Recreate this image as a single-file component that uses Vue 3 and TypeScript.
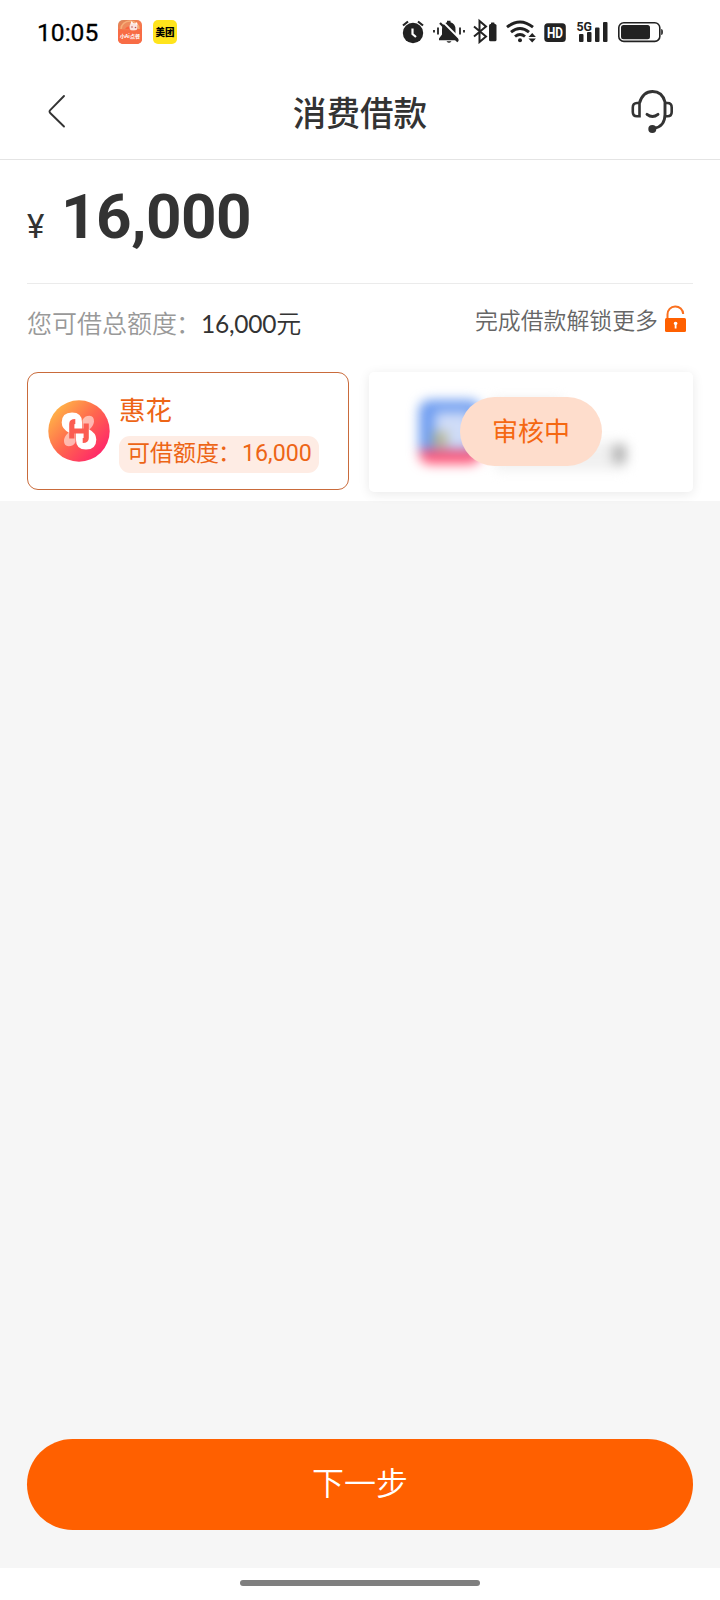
<script setup lang="ts">
const time: string = '10:05'
const amount: number = 16000
const formatted: string = amount.toLocaleString('en-US')
</script>

<template>
  <div class="screen">
    <header class="status">
      <span class="time">{{ time }}</span>
      <svg class="app" width="24" height="24" viewBox="0 0 24 24">
        <defs>
          <linearGradient id="food" x1="0" y1="0" x2="0.4" y2="1">
            <stop offset="0" stop-color="#d98a5c" />
            <stop offset="0.4" stop-color="#f57b50" />
            <stop offset="1" stop-color="#f4683f" />
          </linearGradient>
        </defs>
        <rect width="24" height="24" rx="5" fill="url(#food)" />
        <path d="M3 9a9 8 0 0 1 18 0" fill="#ee8a5c" stroke="#f6ae78" stroke-width="1.5" />
        <path d="M7 9a5 5 0 0 1 9 0" fill="#f9653f" />
        <circle cx="15.500" cy="7" r="4" fill="#fbe3df" />
        <path d="M12.500 4l1-3 2 2.500zM17 4l2-2 .5 3z" fill="#fff" />
        <circle cx="14" cy="7" r=".8" fill="#b55" /><circle cx="17.500" cy="7.500" r=".8" fill="#b55" />
        <path d="M0 9q12 3 24 0v10a5 5 0 0 1-5 5H5a5 5 0 0 1-5-5z" fill="#f86c45" />
        <text x="2" y="18.300" class="tiny">小Ai点餐</text>
      </svg>
      <svg class="app second" width="24" height="24" viewBox="0 0 24 24">
        <rect width="24" height="24" rx="5" fill="#ffe41c" />
        <text x="2.500" y="16" textLength="19" lengthAdjust="spacingAndGlyphs" class="meituan">美团</text>
      </svg>
      <svg class="signals" width="264" height="26" viewBox="400 18 264 26">
        <g fill="#222">
          <circle cx="413" cy="33" r="10.200" />
          <path d="M403 25.500l5-4M423 25.500l-5-4" stroke="#222" stroke-width="2.200" />
          <path d="M412.500 28.500v5.500l3.500 3" fill="none" stroke="#fff" stroke-width="2.200" />

          <path d="M439 38.500l3-4v-5q0-6 5-7.200v-1.500h3.500v1.500q5 1.200 5 7.200v5l3 4v1.800h-19.500z" />
          <path d="M446.500 41.300h5q-2.500 3-5 0z" />
          <path d="M441.500 20.500l19 19" stroke="#fff" stroke-width="1.800" />
          <path d="M440 23l18 18.500" stroke="#222" stroke-width="2.200" />
          <path d="M434 30v2.500M438 27.500v7M460 27.500v7M464 30v2.500" stroke="#222" stroke-width="1.800" />

          <path d="M474 26.500l12 10-6.500 5.500V21l6.500 5.500-12 10" fill="none" stroke="#222" stroke-width="2" />
          <rect x="489" y="24" width="7.500" height="17.200" rx="1.500" />
          <rect x="491" y="22.500" width="3.500" height="2.500" rx=".6" />

          <g fill="none" stroke="#222" stroke-width="2.900">
            <path d="M507 27.200q13-10.500 26 0" />
            <path d="M511 32.200q9-7.600 18 0" />
            <path d="M515 36.500q5-4.200 10 0" />
          </g>
          <circle cx="520" cy="40.200" r="2" />
          <path d="M528.500 37l3.700-4 3.700 4zM528.500 38.500l3.700 4 3.700-4z" />

          <rect x="544.300" y="23.300" width="21.500" height="18.700" rx="3.500" />
          <text x="547" y="37.600" textLength="16" lengthAdjust="spacingAndGlyphs" class="hd">HD</text>

          <text x="576.500" y="30.700" textLength="15.500" lengthAdjust="spacingAndGlyphs" class="fiveg">5G</text>
          <rect x="579" y="34" width="4.500" height="8" rx="1" />
          <rect x="587" y="32" width="4.500" height="10" rx="1" />
          <rect x="595" y="27.500" width="4.500" height="14.500" rx="1" />
          <rect x="603" y="22" width="4.500" height="20" rx="1" />

          <rect x="618.800" y="22.800" width="41" height="18.600" rx="5" fill="none" stroke="#222" stroke-width="1.600" />
          <rect x="621" y="25" width="29" height="14.200" rx="2.500" />
          <path d="M661.200 29q1.700 0 1.700 3t-1.700 3z" />
        </g>
      </svg>
    </header>

    <nav class="nav">
      <svg class="back" width="20" height="36" viewBox="0 0 20 36" fill="none" stroke="#333" stroke-width="1.900" stroke-linecap="round">
        <path d="M17 2L3.200 16.200q-1.400 1.400 0 2.800L17 32.500" />
      </svg>
      <h1>消费借款</h1>
      <svg class="service" width="44" height="46" viewBox="0 0 44 46" fill="none" stroke="#333" stroke-width="2.900">
        <path d="M9.500 15C12 6.500 17 3.500 22.500 3.500S33 6.500 35 14v12.500C35 34 31 39.500 24 40.200" />
        <path d="M9.500 28.300V15H7q-4.200 0-4.200 4.500v4.500q0 4.300 4.200 4.300zM35 15h2.500q4.200 0 4.200 4.500v4.500q0 4.300-4.200 4.300H35" stroke-width="2.600" />
        <path d="M17 26.300q5.500 4.300 11 0" stroke-linecap="round" />
        <circle cx="22.300" cy="41" r="4" fill="#333" stroke="none" />
      </svg>
    </nav>

    <main class="panel">
      <div class="amount"><span class="yen">¥</span><strong>{{ formatted }}</strong></div>
      <div class="quota">
        <span class="label">您可借总额度<span class="colon">：</span></span><span class="value"><span class="num">{{ formatted }}</span>元</span>
        <span class="unlock">完成借款解锁更多</span>
        <svg class="lock" width="24" height="28" viewBox="0 0 24 28">
          <path d="M3.500 14V9.500a7.800 7.800 0 0 1 15.700-.5" fill="none" stroke="#fa701f" stroke-width="2" />
          <rect x="1" y="13" width="21" height="14" rx="1.500" fill="#ff6000" />
          <path d="M9.700 18.700a1.900 1.900 0 1 1 3.800 0l-1 1.300v3.500h-1.800V20z" fill="#fff" />
        </svg>
      </div>
      <div class="cards">
        <section class="card active">
          <svg class="logo" width="62" height="62" viewBox="0 0 62 62">
            <defs>
              <linearGradient id="brand" x1=".1" y1=".15" x2=".85" y2=".85">
                <stop offset="0" stop-color="#ffb347" />
                <stop offset=".5" stop-color="#ff674e" />
                <stop offset="1" stop-color="#ff2a68" />
              </linearGradient>
            </defs>
            <circle cx="31" cy="31" r="30.700" fill="url(#brand)" />
            <g fill="#fff" opacity=".55">
              <path d="M34.500 20q2-4.300 7-4.300 4.500.3 4.500 5.500 0 4-4.500 8.300h-7z" />
              <path d="M27.500 42q-2 4.300-7 4.300-4.500-.3-4.500-5.500 0-4 4.500-8.300h7z" />
            </g>
            <g fill="#fff">
              <path d="M21.500 33Q13.700 29 13.700 22.500q0-10 10.300-10 10 0 10 9.500v7H27v4z" />
              <path d="M40.500 29Q48.300 33 48.300 39.500q0 10-10.300 10-10 0-10-9.500v-7H35v-4z" />
            </g>
            <path d="M23.800 38.500V24q0-2.500 3.500-2.500M24 31h14M38.200 23.500V38q0 2.500-3.500 2.500" fill="none" stroke="#fb5c51" stroke-width="5.200" />
          </svg>
          <div class="info">
            <h2>惠花</h2>
            <p>可借额度<span class="colon">：</span><span class="digits">{{ formatted }}</span></p>
          </div>
        </section>
        <section class="card pending">
          <div class="hazy"><i class="tile"><i class="glow"></i><i class="gold"></i></i><i class="name"></i><i class="line"></i><i class="digit"></i></div>
          <span class="badge">审核中</span>
        </section>
      </div>
    </main>

    <div class="action"><button type="button">下一步</button></div>
    <footer class="home"><span></span></footer>
  </div>
</template>

<style>
html, body { margin: 0; background: #f6f6f6; }
</style>

<style scoped>
.screen {
  box-sizing: border-box;
  width: 720px;
  height: 1600px;
  display: flex;
  flex-direction: column;
  overflow: hidden;
  background: #f6f6f6;
  color: #333;
  font-family: Roboto, "Noto Sans CJK SC", sans-serif;
}
.status { height: 64px; display: flex; align-items: center; background: #fff; flex: none; box-sizing: border-box; padding-left: 37px; }
.time { width: 81px; font: 400 24.600px/30px Roboto, sans-serif; color: #000; -webkit-text-stroke: .3px #000; padding-top: 2px; box-sizing: border-box; }
.app.second { margin-left: 11px; }
.signals { margin-left: 223px; margin-top: -2px; }
.tiny { font: 700 5.100px "Noto Sans CJK SC", sans-serif; fill: #fff; }
.meituan { font: 900 10px "Noto Sans CJK SC", sans-serif; fill: #000; }
.hd { font: 700 14px Roboto, sans-serif; fill: #fff; }
.fiveg { font: 700 13px Roboto, sans-serif; fill: #222; }
.nav {
  height: 96px;
  flex: none;
  box-sizing: border-box;
  display: flex;
  align-items: center;
  justify-content: space-between;
  padding: 0 46px;
  border-bottom: 1px solid #e4e4e4;
  background: #fff;
}
.back { width: 66px; height: 36px; margin-left: -22px; }
.service { margin: 0 0 2px; }
h1 { margin: 7px 0 0; font-size: 33.600px; line-height: 48px; font-weight: 500; }
.panel { height: 341px; flex: none; box-sizing: border-box; padding: 0 27px; background: #fff; }
.amount { height: 123px; box-sizing: content-box; border-bottom: 1px solid #ebebeb; display: flex; align-items: baseline; }
.yen { width: 34px; font-size: 33px; font-family: Roboto, sans-serif; }
.amount strong { font: 700 62px/72px Roboto, sans-serif; letter-spacing: -.5px; padding-top: 21px; }
.quota { display: flex; align-items: center; height: 88px; box-sizing: border-box; padding-bottom: 12px; font-size: 25px; }
.label { color: #999; width: 174px; white-space: nowrap; font-weight: 350; }
.colon { margin-left: -1px; }
.value { font-weight: 350; white-space: nowrap; }
.num { font: 400 24.500px Lato, sans-serif; letter-spacing: -.25px; }
.unlock { margin-left: auto; font-size: 22.900px; color: #666; padding-bottom: 7px; font-weight: 350; }
.lock { margin: 0 5px 6px 6px; }
.cards { display: flex; justify-content: space-between; align-items: flex-start; }
.card { box-sizing: border-box; background: #fff; display: flex; align-items: center; }
.active { width: 322px; height: 118px; border: 1px solid #c96b3b; border-radius: 11px; padding-left: 20px; }
.logo { flex: none; margin-left: -.5px; }
.info { margin-left: 9.500px; color: #ed6516; padding-top: 4px; }
h2 { margin: 0; font-size: 26.500px; line-height: 34px; font-weight: 400; }
.info p { margin: 8px 0 0; height: 37px; width: 200px; box-sizing: border-box; padding-left: 8px; border-radius: 11px; background: #feece4; font-size: 23px; line-height: 35px; white-space: nowrap; }
.digits { font-size: 23.200px; margin-left: 1px; }
.pending { position: relative; width: 324px; height: 120px; border-radius: 5px; box-shadow: 0 2px 12px rgba(0, 0, 0, .09); justify-content: center; }
.hazy { position: absolute; inset: 0; filter: blur(6px); }
.hazy i { position: absolute; display: block; }
.tile { left: 50px; top: 28px; width: 62px; height: 64px; border-radius: 11px; background: linear-gradient(#6d9cf0 0 78%, #ff5577 78%); overflow: hidden; }
.tile .glow { left: 16px; top: 12px; width: 36px; height: 36px; background: #cfdcf8; }
.tile .gold { left: 14px; top: 32px; width: 14px; height: 15px; background: #b8b58d; }
.name { left: 123px; top: 28px; width: 70px; height: 24px; background: #e6e6e6; }
.line { left: 126px; top: 70px; width: 130px; height: 28px; background: #f0f0f0; }
.digit { left: 244px; top: 73px; width: 13px; height: 18px; background: #b0b0b0; }
.badge { position: relative; top: -1px; width: 142px; height: 69px; border-radius: 35px; background: #feddcc; color: #f56812; font-size: 26px; line-height: 70px; text-align: center; }
.action { margin-top: auto; padding: 0 27px 38px; }
button { display: block; width: 100%; height: 91px; padding: 0 0 8px; border: 0; border-radius: 46px; background: #ff6000; color: #fff; font: 350 32px "Noto Sans CJK SC", sans-serif; }
.home { height: 32px; flex: none; background: #fff; display: flex; align-items: center; justify-content: center; box-sizing: border-box; }
.home span { width: 240px; height: 6px; border-radius: 3px; background: #7f7f7f; margin-bottom: 2px; }
</style>
